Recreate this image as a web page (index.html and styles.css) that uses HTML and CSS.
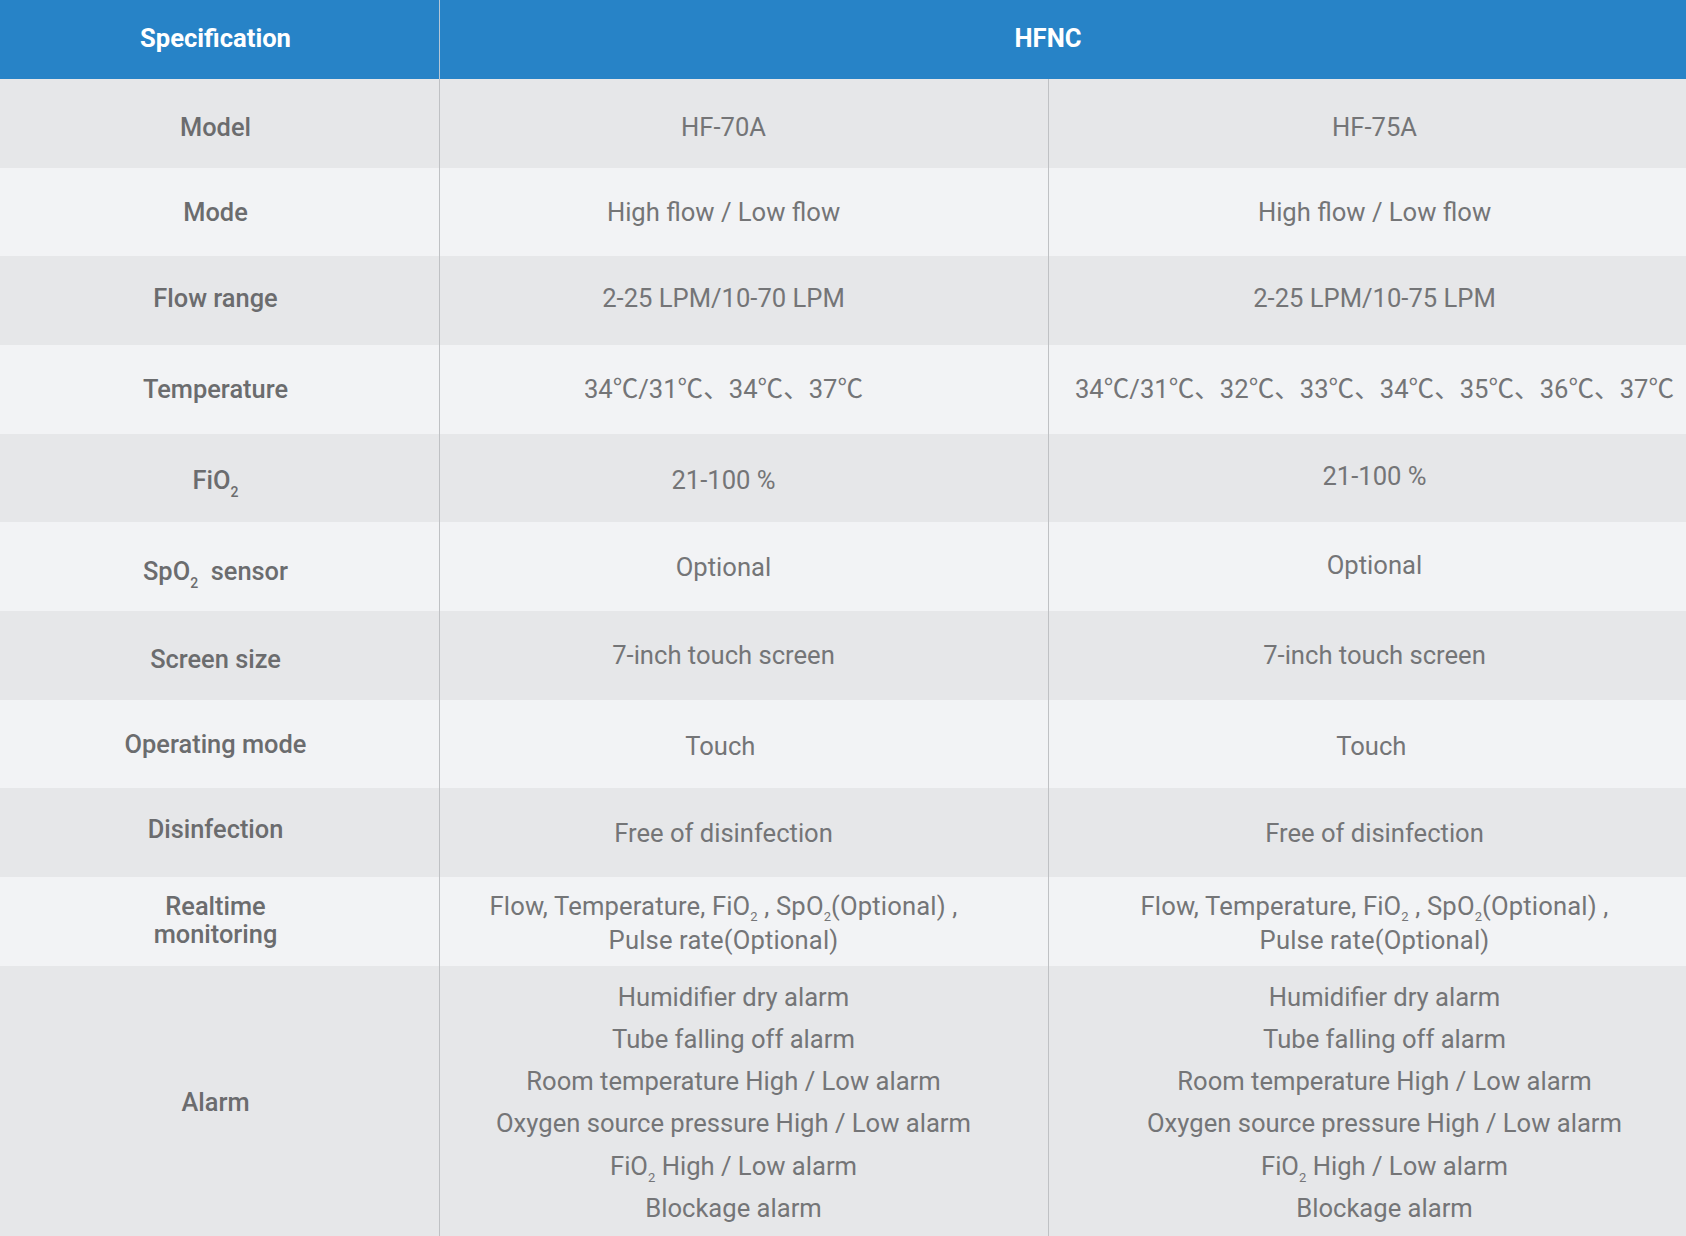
FILE: index.html
```html
<!DOCTYPE html>
<html lang="en">
<head>
<meta charset="utf-8">
<title>HFNC Specification</title>
<link rel="stylesheet" href="styles.css">
</head>
<body>
<div class="spec">
  <div class="row head">
    <div class="cell lbl u2"><span>Specification</span></div>
    <div class="cell hfnc u2"><span>HFNC</span></div>
  </div>

  <div class="row dark">
    <div class="cell lbl d4"><span>Model</span></div>
    <div class="cell v1 d4"><span>HF-70A</span></div>
    <div class="cell v2 d4"><span>HF-75A</span></div>
  </div>

  <div class="row light">
    <div class="cell lbl"><span>Mode</span></div>
    <div class="cell v1"><span>High flow / Low flow</span></div>
    <div class="cell v2"><span>High flow / Low flow</span></div>
  </div>

  <div class="row dark">
    <div class="cell lbl u3"><span>Flow range</span></div>
    <div class="cell v1 u3"><span>2-25 LPM/10-70 LPM</span></div>
    <div class="cell v2 u3"><span>2-25 LPM/10-75 LPM</span></div>
  </div>

  <div class="row light">
    <div class="cell lbl"><span>Temperature</span></div>
    <div class="cell v1"><span>34℃/31℃、34℃、37℃</span></div>
    <div class="cell v2"><span>34℃/31℃、32℃、33℃、34℃、35℃、36℃、37℃</span></div>
  </div>

  <div class="row dark">
    <div class="cell lbl d2"><span>FiO<sub>2</sub></span></div>
    <div class="cell v1 d2"><span>21-100 %</span></div>
    <div class="cell v2 u2"><span>21-100 %</span></div>
  </div>

  <div class="row light">
    <div class="cell lbl d4"><span>SpO<sub>2</sub>&nbsp; sensor</span></div>
    <div class="cell v1"><span>Optional</span></div>
    <div class="cell v2 u2"><span>Optional</span></div>
  </div>

  <div class="row dark">
    <div class="cell lbl d4"><span>Screen size</span></div>
    <div class="cell v1"><span>7-inch touch screen</span></div>
    <div class="cell v2"><span>7-inch touch screen</span></div>
  </div>

  <div class="row light">
    <div class="cell lbl"><span>Operating mode</span></div>
    <div class="cell v1 d2"><span>Touch&nbsp;</span></div>
    <div class="cell v2 d2"><span>Touch&nbsp;</span></div>
  </div>

  <div class="row dark">
    <div class="cell lbl u4"><span>Disinfection</span></div>
    <div class="cell v1"><span>Free of disinfection</span></div>
    <div class="cell v2"><span>Free of disinfection</span></div>
  </div>

  <div class="row light">
    <div class="cell lbl two"><span>Realtime<br>monitoring</span></div>
    <div class="cell v1 mon"><span>Flow, Temperature, FiO<sub>2</sub> , SpO<sub>2</sub>(Optional) ,<br>Pulse rate(Optional)</span></div>
    <div class="cell v2 mon"><span>Flow, Temperature, FiO<sub>2</sub> , SpO<sub>2</sub>(Optional) ,<br>Pulse rate(Optional)</span></div>
  </div>

  <div class="row dark tall">
    <div class="cell lbl"><span>Alarm</span></div>
    <div class="cell v1">
      <ul class="alarms">
        <li>Humidifier dry alarm</li>
        <li>Tube falling off alarm</li>
        <li>Room temperature High / Low alarm</li>
        <li>Oxygen source pressure High / Low alarm</li>
        <li>FiO<sub>2</sub> High / Low alarm</li>
        <li>Blockage alarm</li>
      </ul>
    </div>
    <div class="cell v2">
      <ul class="alarms">
        <li>Humidifier dry alarm</li>
        <li>Tube falling off alarm</li>
        <li>Room temperature High / Low alarm</li>
        <li>Oxygen source pressure High / Low alarm</li>
        <li>FiO<sub>2</sub> High / Low alarm</li>
        <li>Blockage alarm</li>
      </ul>
    </div>
  </div>
</div>
</body>
</html>
```
FILE: styles.css
```css
* { box-sizing: border-box; }

html, body {
  margin: 0;
  padding: 0;
  background: #f2f3f5;
}

body {
  font-family: Roboto, "Noto Sans CJK SC", "Noto Sans", sans-serif;
  color: #747577;
  font-size: 25.6px;
}

.spec {
  width: 1686px;
}

.row {
  display: grid;
  grid-template-columns: 440px 609px 1fr;
  height: 88.667px;
}

.row.dark { background: #e6e7e9; }
.row.light { background: #f2f3f5; }

.row.head {
  grid-template-columns: 440px 1fr;
  height: 79px;
  background: #2783c7;
  color: #ffffff;
}

.row.tall { height: auto; }

.cell {
  display: flex;
  align-items: center;
  justify-content: center;
  text-align: center;
  white-space: nowrap;
  line-height: 30px;
}

.cell.lbl {
  padding-right: 8px;
  border-right: 1px solid #bfc1c4;
  font-weight: 500;
  font-size: 25.4px;
  color: #6b6c6e;
}

.head .cell.lbl {
  font-weight: 700;
  font-size: 25.6px;
  color: #ffffff;
  border-right-color: #b4c6d6;
}

.cell.hfnc {
  padding-right: 30px;
  font-weight: 700;
  font-size: 25.6px;
}

.cell.v1 {
  padding-right: 41px;
  border-right: 1px solid #bfc1c4;
}

.cell.v2 {
  padding-left: 14px;
}

/* small vertical nudges following the source alignment */
.d2 { padding-top: 4px; }
.d4 { padding-top: 8px; }
.u2 { padding-bottom: 4px; }
.u3 { padding-bottom: 6px; }
.u4 { padding-bottom: 8px; }

sub {
  font-size: 14px;
  line-height: 0;
  vertical-align: -8px;
}

.cell.two {
  line-height: 28px;
  padding-bottom: 3px;
}

.cell.mon {
  line-height: 34.3px;
  padding-top: 4px;
  letter-spacing: 0.15px;
}

.mon sub {
  font-size: 13px;
  vertical-align: -6px;
}

.alarms {
  list-style: none;
  margin: 0;
  padding: 10.6px 0 10.6px 20px;
  line-height: 42.1px;
}

.alarms li {
  margin: 0;
}

.alarms sub {
  font-size: 13px;
  vertical-align: -7px;
}
```
